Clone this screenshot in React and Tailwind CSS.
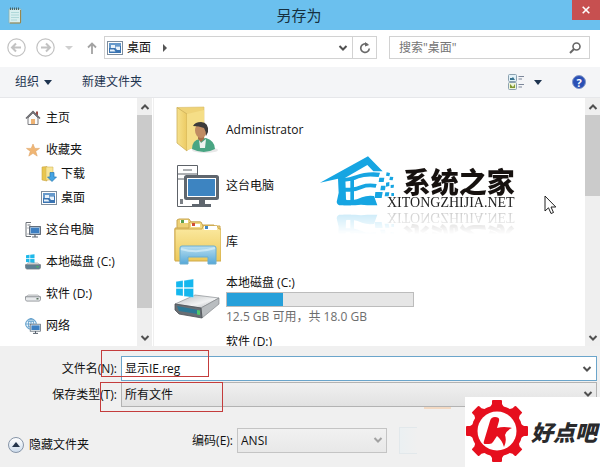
import React, { useState } from "react";

function DesktopIcon() {
	return (
		<svg viewBox="0 0 16 14" className="w-4 h-3.5 shrink-0">
			<rect x="0.5" y="0.5" width="15" height="13" fill="#fff" stroke="#7d8d9d" />
			<rect x="2" y="2" width="12" height="10" fill="#3a74b2" />
			<path d="M2 2h12v3H9l-2 2H2z" fill="#6699cb" />
			<path d="M4 4h4v3H4zM8.500 5.500H13V9H10L8.500 7zM3 8.500h4l1.500 2H3z" fill="#e9f3fb" />
		</svg>
	);
}

function HomeIcon() {
	return (
		<svg viewBox="0 0 16 16" className="size-4 shrink-0">
			<path d="M3 8v6.500h10V8L8 3z" fill="#fafafa" stroke="#7d7d80" />
			<path d="M11 1.500h2V6l-2-2z" fill="#9b4b45" />
			<path d="M1 8.500 8 1.500l7 7" fill="none" stroke="#66666b" strokeWidth="1.500" />
			<path d="M6 9h4v5H6z" fill="#eeb273" />
		</svg>
	);
}

function StarIcon() {
	return (
		<svg viewBox="0 0 16 16" className="size-4 shrink-0">
			<path d="M8 2l1.800 4.400h4.700l-3.800 2.900 1.500 4.800L8 11.300l-4.200 2.800 1.500-4.800-3.800-2.900h4.700z" fill="#f0b674" stroke="#dfa567" strokeWidth=".6" />
		</svg>
	);
}

function DownloadIcon() {
	return (
		<svg viewBox="0 0 16 16" className="size-4 shrink-0">
			<path d="M1 1l5-.5V15l-5-1z" fill="#e9c64e" stroke="#c9a544" strokeWidth=".6" />
			<path d="M5 1h7v13H5z" fill="#f8e596" stroke="#d4b65a" strokeWidth=".6" />
			<path d="M9 6.500h4V11h2.500L11 15.500 6.500 11H9z" fill="#45a4e3" stroke="#2578b5" strokeWidth=".7" />
		</svg>
	);
}

function SmallPcIcon() {
	return (
		<svg viewBox="0 0 16 16" className="size-4 shrink-0">
			<path d="M6 .5H1v14h5M2.500 3h3M2.500 6h1M2.500 12h1" fill="none" stroke="#6d7278" />
			<rect x="4.700" y="4.700" width="10.600" height="7.600" fill="#3d7fc2" stroke="#5b6470" strokeWidth="1.200" />
			<path d="M5.500 5.500h9v6h-9z" fill="none" stroke="#d4e6f6" strokeWidth=".6" />
			<path d="M10 12.500v2M7 15h6" stroke="#5b6470" strokeWidth="1.200" />
		</svg>
	);
}

function SmallDriveIcon({ system }) {
	return (
		<svg viewBox="0 0 16 16" className="size-4 shrink-0">
			{system && <path d="M1 1.200 4.500.8v3.500H1zM5.200.7 9.500.2v4.100H5.200zM1 5h3.500v3.500L1 8.100zM5.200 5h4.300v4l-4.300-.4z" fill="#1fb9ea" />}
			<path d="M3.500 9h9L15.500 11H.5z" fill="#e6e8ea" stroke="#8d9196" strokeWidth=".6" />
			<path d="M.5 10.800h15v3l-1 1.300h-13l-1-1.300z" fill={system ? "#5d7f93" : "#e8eaec"} stroke="#777b80" strokeWidth=".7" />
			<path d="M11.500 12h2v1.500h-2z" fill={system ? "#48b460" : "#57715c"} />
		</svg>
	);
}

function NetworkIcon() {
	return (
		<svg viewBox="0 0 16 16" className="size-4 shrink-0">
			<circle cx="6" cy="6" r="5.300" fill="#edf6fc" stroke="#5a9bc9" />
			<path d="M.7 6h10.600M6 .7v10.600M2 2.800q4 2 8 0M2 9.200q4-2 8 0" fill="none" stroke="#5a9bc9" strokeWidth=".8" />
			<ellipse cx="6" cy="6" rx="2.600" ry="5.300" fill="none" stroke="#5a9bc9" strokeWidth=".8" />
			<rect x="5.600" y="6.600" width="9.800" height="6.200" fill="#3d7fc2" stroke="#e9f0f5" strokeWidth="1.600" />
			<rect x="5.200" y="6.200" width="10.400" height="7" fill="none" stroke="#59636e" strokeWidth=".7" />
			<path d="M10.500 13v2M8 15.400h5" stroke="#59636e" />
		</svg>
	);
}

function UserFolderIcon() {
	return (
		<svg viewBox="0 0 48 48" className="size-12 shrink-0">
			<defs>
				<linearGradient id="uf" x1="0" x2="1">
					<stop offset="0" stopColor="#f6e18c" />
					<stop offset="1" stopColor="#ecca62" />
				</linearGradient>
			</defs>
			<ellipse cx="32" cy="44" rx="13" ry="3" fill="#e8e8e8" />
			<path d="M4 1.500 31 1v36L14 44z" fill="#efd377" stroke="#d8bc66" strokeWidth=".6" />
			<path d="M4 1.500 14 8v37L4 37z" fill="url(#uf)" stroke="#cdb05a" strokeWidth=".8" />
			<path d="M14 8 31 4v34l-17 6z" fill="#f5de87" />
			<path d="M19 43q0-9 8-10l6-1q9 3 9 11-11 6-23 0z" fill="#49a583" />
			<path d="M26 33l2 4 5-4-1 9h-5z" fill="#eef3f0" />
			<path d="M25 27h6v6l-3 3-3-3z" fill="#a3714c" />
			<ellipse cx="28" cy="24.500" rx="6" ry="7.500" fill="#c08c62" />
			<path d="M20 20q2-4 8-4 8 .5 7 10l-2 4q0-5-2-8-5-2-11-2z" fill="#3d3b3a" />
		</svg>
	);
}

function PcIcon() {
	return (
		<svg viewBox="0 0 48 48" className="size-12 shrink-0">
			<path d="M24.500 14V3.500h-20v41H23M4.500 12H24M4.500 17H11" fill="none" stroke="#5d6268" />
			<path d="M10 8h9" stroke="#5d6268" />
			<path d="M7 37h3v5H7z" fill="#7b8086" />
			<rect x="12.500" y="14.500" width="32" height="22" rx="1" fill="#fff" stroke="#5f666e" strokeWidth="3" />
			<rect x="15" y="17" width="27" height="17" fill="#3d84c1" />
			<path d="M26 37h6v5h6v3H19v-3h7z" fill="#5f666e" />
		</svg>
	);
}

function LibraryIcon() {
	return (
		<svg viewBox="0 0 48 48" className="size-12 shrink-0">
			<defs>
				<linearGradient id="lib" x1="0" y1="0" x2="0" y2="1">
					<stop offset="0" stopColor="#fbeaa2" />
					<stop offset="1" stopColor="#edc95a" />
				</linearGradient>
				<linearGradient id="stand" x1="0" y1="0" x2="0" y2="1">
					<stop offset="0" stopColor="#b9dff0" />
					<stop offset="1" stopColor="#57a8d8" />
				</linearGradient>
			</defs>
			<path d="M4 8V2l2-1h10l2 3h9l2 3h12v32H4z" fill="#edd177" stroke="#c9a651" />
			<path d="M7 2h8v3H7z" fill="#fff" />
			<path d="M8 2h3v3H8z" fill="#5aa14e" />
			<path d="M2 10h14V5l1-1h11l2 4h17v34H2z" fill="#f2da83" stroke="#cba650" />
			<path d="M18 6h9v3h-9z" fill="#fff" />
			<path d="M19 5h3v3h-3z" fill="#d14c37" />
			<path d="M2 11h27l1-3h14l2 3h2v32H2z" fill="url(#lib)" stroke="#cfa94b" />
			<path d="M31 8h13v4H31z" fill="#fff" />
			<path d="M32 8h3v3h-3z" fill="#4286c3" />
			<path d="M7 46V30q0-2 2-2h32q2 0 2 2v16h-8v-7H15v7z" fill="url(#stand)" stroke="#6aaed1" />
			<path d="M8 31q16 5 34-1" fill="none" stroke="#d9f0f8" strokeWidth="2" opacity=".7" />
		</svg>
	);
}

function DriveIcon({ system }) {
	return (
		<svg viewBox="0 0 48 48" className="size-12 shrink-0">
			<defs>
				<linearGradient id="drv" x1="0" y1="0" x2="1" y2="1">
					<stop offset="0" stopColor="#b8bcbf" />
					<stop offset=".6" stopColor="#f1f2f3" />
					<stop offset="1" stopColor="#a9adb1" />
				</linearGradient>
			</defs>
			<path d="M2 28 22 19l24 3-18 10z" fill="url(#drv)" stroke="#8b8f93" strokeWidth=".7" />
			<path d="M28 32 46 22v6L29 42z" fill="#b9bdc0" stroke="#7a7e82" strokeWidth=".6" />
			<path d="M2 28l26 4 1 10-23-4-4-4z" fill="#686e74" stroke="#4c5155" strokeWidth=".8" />
			<path d="M4 30l21 4v4L6 35z" fill="#2c7896" />
			<path d="M24 34l3 .5V39l-3-.5z" fill="#4fc66a" />
			{system && <path d="M3 5.500 10 4.500v7H3zM11 4.400 20.500 3v8.500H11zM3 12.500h7V20l-7-.8zM11 12.500h9.500v9L11 20.300z" fill="#14b7ee" stroke="#fff" strokeWidth=".3" />}
		</svg>
	);
}

function NotepadIcon() {
	return (
		<svg viewBox="0 0 14 17" className="w-3.5 h-[17px]">
			<path d="M1 2h12v13l-1 1H1z" fill="#d8efef" stroke="#8fb1ac" strokeWidth=".8" />
			<path d="M12.500 3v13H2" fill="none" stroke="#98874e" />
			<path d="M3 5.500h8M3 8h8M3 10.500h8M3 13h6" stroke="#a3d2d3" strokeWidth=".8" />
			<path d="M2.500.5v2.500M4.500.5v2.500M6.500.5v2.500M8.500.5v2.500M10.500.5v2.500" stroke="#3f5a5c" strokeWidth=".9" />
		</svg>
	);
}

function Chevron({ up = false, color = "#505050" }) {
	return (
		<svg viewBox="0 0 10 8" className="w-2.5 h-2">
			<path d={up ? "M1.500 6 5 2.500 8.500 6" : "M1.500 2 5 5.500 8.500 2"} fill="none" stroke={color} strokeWidth="2" />
		</svg>
	);
}

function Caret() {
	return (
		<svg viewBox="0 0 8 5" className="w-2 h-[5px]">
			<path d="M0 0h8L4 5z" fill="#1e3450" />
		</svg>
	);
}

function ScrollBar({ children }) {
	return (
		<div className="w-[15px] shrink-0 flex flex-col bg-[#efefef]">
			<button aria-label="向上滚动" className="h-[17px] flex items-center justify-center"><Chevron up /></button>
			<div className="flex-1 flex flex-col">{children}</div>
			<button aria-label="向下滚动" className="h-[17px] flex items-center justify-center"><Chevron /></button>
		</div>
	);
}

function SiteMark() {
	return (
		<div className="absolute left-[320px] top-[58px] flex items-start pointer-events-none [-webkit-box-reflect:below_0px_linear-gradient(transparent_55%,rgba(0,0,0,0.25))]">
			<svg viewBox="30 35 225 150" className="w-[75px] h-[50px]">
				<g fill="#16a5e2">
					<path d="M30 115 174 36l44 45h-28l-18-19-66 38 2 64q0 4 5 4h12l-2 15H92q-10 0-12-10l6-28-2-42z" />
					<path d="M98 102q20-2 40-9 30-12 72-8l-4 13q-38-5-60 4-20 10-45 10z" />
					<path d="M98 130h24q18-2 32-8 18-7 46-3l-3 11q-26-3-40 3-20 9-37 9H98z" />
					<path d="M121 105h11v66h-11z" />
					<path d="M104 168h20q18-2 32-9 16-7 36-4l10 28h-30q-20-4-36 0h-36z" />
					<path d="M208 100h15l-2 13h-15zM230 84l10 2-2 10-10-2zM228 115l10-2v12l-10 2zM213 124h14l-2 14h-14zM240 97l10 1-2 10-10-1zM196 143h22l-3 18h-21zM226 144h12l-2 12h-12zM242 122l10-1-1 9-9 1zM244 146h8v9h-8z" />
				</g>
			</svg>
			<div className="-ml-2 pt-3 flex flex-col items-end">
				<span className="text-[28px] leading-7 font-black text-[#16110f]">系统之家</span>
				<span className="text-sm leading-[14px] text-[#222] font-['Liberation_Serif',serif]">XITONGZHIJIA.NET</span>
			</div>
		</div>
	);
}

function GearMark() {
	return (
		<div className="absolute right-0 bottom-0 w-[135px] h-[70px] bg-white flex items-center overflow-hidden pointer-events-none">
			<svg viewBox="-32 -31 64 64" className="size-16 shrink-0">
				<g fill="#e60f1e">
					{[0, 45, 90, 135, 180, 225, 270, 315].map((a) => (
						<path key={a} d="M-8-22-5-27v-3q0-1 1-1h8q1 0 1 1v3l3 5z" transform={`rotate(${a})`} />
					))}
					<circle r="25.500" />
				</g>
				<circle r="19.500" fill="#fff" />
				<path d="M-7-10q1-4 5-4 5 0 4 4L0-3Q7-5 15-3 10-1 8 4q2 6-1 12Q5 9 0 5l-4 6q-1 2-4 2h-4q-2 0-1-3z" fill="#e60f1e" />
			</svg>
			<span className="ml-0.5 text-[22px] leading-none italic font-black text-[#2a2a2c] whitespace-nowrap">好点吧</span>
		</div>
	);
}

const places = [
	{ name: "主页", icon: <HomeIcon /> },
	{
		name: "收藏夹",
		icon: <StarIcon />,
		items: [
			{ name: "下载", icon: <DownloadIcon /> },
			{ name: "桌面", icon: <DesktopIcon /> }
		]
	},
	{ name: "这台电脑", icon: <SmallPcIcon /> },
	{ name: "本地磁盘 (C:)", icon: <SmallDriveIcon system /> },
	{ name: "软件 (D:)", icon: <SmallDriveIcon /> },
	{ name: "网络", icon: <NetworkIcon /> }
];

const files = [
	{ name: "Administrator", icon: <UserFolderIcon /> },
	{ name: "这台电脑", icon: <PcIcon /> },
	{ name: "库", icon: <LibraryIcon /> },
	{ name: "本地磁盘 (C:)", icon: <DriveIcon system />, used: 30, space: "12.5 GB 可用，共 18.0 GB" },
	{ name: "软件 (D:)" }
];

export default function App() {
	const [fileName, setFileName] = useState("显示IE.reg");

	return (
		<div className="relative h-screen flex flex-col overflow-hidden bg-white text-xs text-[#111] font-['Open_Sans','Noto_Sans_CJK_SC',sans-serif]">
			{/* Title bar */}
			<header className="h-[30px] shrink-0 flex items-center justify-between pl-2 bg-[#6bc0ee]">
				<NotepadIcon />
				<h1 className="flex-1 pl-1 text-center text-[15px] leading-5 text-[#16303f]">另存为</h1>
				<button aria-label="关闭" className="self-start w-7 h-5 bg-[#c75050] flex items-center justify-center">
					<svg viewBox="0 0 8 8" className="size-2"><path d="M.7.700l6.600 6.600M7.300.7.700 7.300" stroke="#fff" strokeWidth="1.600" /></svg>
				</button>
			</header>

			{/* Address row */}
			<div className="h-[37px] shrink-0 flex items-center pl-[7px] pr-2.5 pb-1 pt-0.5">
				<button aria-label="后退" className="mr-2.5">
					<svg viewBox="0 0 19 19" className="size-[19px]" fill="none" stroke="#c2c2c2"><circle cx="9.500" cy="9.500" r="8.700" strokeWidth="1.200" /><path d="M14 9.500H5.500M9 5.500l-4 4 4 4" strokeWidth="2" /></svg>
				</button>
				<button aria-label="前进" className="mr-2.5">
					<svg viewBox="0 0 19 19" className="size-[19px]" fill="none" stroke="#c2c2c2"><circle cx="9.500" cy="9.500" r="8.700" strokeWidth="1.200" /><path d="M5 9.500h8.500M10 5.500l4 4-4 4" strokeWidth="2" /></svg>
				</button>
				<button aria-label="最近位置" className="mr-3.5">
					<svg viewBox="0 0 8 4" className="w-2 h-1"><path d="M0 0h8L4 4z" fill="#cfcfcf" /></svg>
				</button>
				<button aria-label="上移" className="mr-[7px]">
					<svg viewBox="0 0 10 12" className="w-2.5 h-3" fill="none" stroke="#a3a3a3" strokeWidth="1.800"><path d="M5 12V1.500M1 5.500l4-4 4 4" /></svg>
				</button>
				<div className="flex-1 h-[23px] border border-[#d2d2d2] flex items-center pl-0.5">
					<DesktopIcon />
					<span className="ml-1">桌面</span>
					<svg viewBox="0 0 4 8" className="ml-3 w-1 h-2"><path d="M0 0l4 4-4 4z" fill="#555" /></svg>
					<button aria-label="展开路径" className="ml-auto mr-1"><Chevron /></button>
					<button aria-label="刷新" className="self-stretch w-6 border-l border-[#d2d2d2] flex items-center justify-center">
						<svg viewBox="0 0 12 12" className="size-3"><path d="M8.500 2.600A4.300 4.300 0 1 0 10.300 6.500" fill="none" stroke="#6a6a6a" strokeWidth="1.700" /><path d="M6 0v4.500L10.200 3z" fill="#6a6a6a" /></svg>
					</button>
				</div>
				<label className="ml-3 w-[201px] h-[23px] border border-[#d2d2d2] flex items-center pl-[9px] pr-2">
					<input aria-label="搜索" placeholder={'搜索"桌面"'} className="min-w-0 flex-1 outline-none placeholder:text-[#757575]" />
					<svg viewBox="0 0 12 12" className="size-3" fill="none" stroke="#666"><circle cx="7.500" cy="4.500" r="3.500" strokeWidth="1.600" /><path d="M5 7 1 11" strokeWidth="2" /></svg>
				</label>
			</div>

			{/* Toolbar */}
			<div className="h-[31px] shrink-0 flex items-center pl-[15px] pr-3.5 bg-[#f4f5f7] border-b border-[#e6e7ea] text-[#1e3450]">
				<button className="flex items-center gap-[5px]">组织<Caret /></button>
				<button className="ml-[30px]">新建文件夹</button>
				<button aria-label="更改视图" className="ml-auto flex items-center gap-2.5">
					<svg viewBox="0 0 16 16" className="size-4">
						<rect x=".5" y=".5" width="8" height="7" rx="1" fill="#e2f1f8" stroke="#8ba1b0" />
						<path d="M2 6V4h2l1-1 2 3z" fill="#37728e" />
						<rect x=".5" y="8.500" width="8" height="7" rx="1" fill="#eef4da" stroke="#8ba1b0" />
						<path d="M2 10l3 3 2-3v4H2z" fill="#809831" />
						<path d="M10.500 2.500H16M10.500 5H14M10.500 10.500H16M10.500 13H14" stroke="#7c879a" />
					</svg>
					<Caret />
				</button>
				<button aria-label="帮助" className="ml-[30px] size-3.5 rounded-full bg-[#2a50b5] border border-[#8497c6] text-white text-[11px] leading-none font-bold flex items-center justify-center">?</button>
			</div>

			{/* Folder tree and file list */}
			<main className="relative flex-1 min-h-0 flex overflow-hidden">
				<nav className="w-[137px] shrink-0 pt-2 pl-[25px]">
					<ul className="flex flex-col gap-2">
						{places.map((place) => (
							<li key={place.name}>
								<a href="#" className="h-6 flex items-center gap-[5px] whitespace-nowrap">{place.icon}{place.name}</a>
								{place.items && (
									<ul className="pl-4">
										{place.items.map((item) => (
											<li key={item.name}>
												<a href="#" className="h-6 flex items-center gap-1">{item.icon}{item.name}</a>
											</li>
										))}
									</ul>
								)}
							</li>
						))}
					</ul>
				</nav>
				<ScrollBar><div className="h-[90%] bg-[#cbcbcb]" /></ScrollBar>

				<ul className="flex-1 min-w-0 ml-px border-l border-[#efefef] pt-1 pl-[19px]">
					{files.map((file) => (
						<li key={file.name} className={file.space ? "h-[60px] flex items-center gap-[5px]" : "h-14 flex items-center gap-[5px]"}>
							{file.icon}
							{file.icon ? (
								<div>
									<p className="leading-4">{file.name}</p>
									{file.space && (
										<>
											<div className="mt-px w-[188px] h-[15px] bg-[#e6e6e6] border border-[#bcbcbc]">
												<div className="h-full bg-[#26a0da]" style={{ width: `${file.used}%` }} />
											</div>
											<p className="mt-0.5 leading-4 text-[#6d6d6d]">{file.space}</p>
										</>
									)}
								</div>
							) : (
								<p className="self-start pt-1 pl-[53px] leading-4">{file.name}</p>
							)}
						</li>
					))}
				</ul>
				<ScrollBar><div className="h-[38%] bg-[#cbcbcb]" /></ScrollBar>

				<SiteMark />
				<svg viewBox="0 0 13 20" className="absolute left-[544px] top-[97px] w-[13px] h-5">
					<path d="M1 1v15l3.500-3.200L7 18.500l2.500-1L7 12h4.800z" fill="#fff" stroke="#222" />
				</svg>
			</main>

			{/* File name, type and encoding */}
			<form className="relative shrink-0 h-[121px] bg-[#f0f0f0] pt-2.5 pr-[3px]" onSubmit={(e) => e.preventDefault()}>
				<div className="flex items-center">
					<label htmlFor="name" className="w-[121px] pr-1 text-right">文件名(N):</label>
					<div className="flex-1 h-[25px] flex items-center border border-[#6ba5cb] bg-white pr-1">
						<input id="name" value={fileName} onChange={(e) => setFileName(e.target.value)} className="min-w-0 flex-1 pl-[3px] outline-none" />
						<button type="button" aria-label="历史文件名"><Chevron /></button>
					</div>
				</div>
				<div className="mt-px flex items-center">
					<label htmlFor="type" className="w-[121px] pr-1 text-right">保存类型(T):</label>
					<div className="relative flex-1">
						<select id="type" className="block w-full h-[25px] pl-[3px] appearance-none border border-[#b3b3b3] bg-linear-to-b from-[#f0f0f0] to-[#e2e2e2] outline-none">
							<option>所有文件</option>
						</select>
						<span className="absolute right-1 top-2 pointer-events-none"><Chevron /></span>
					</div>
				</div>
				<div className="mt-5 flex items-center">
					<button type="button" className="mt-2 ml-2 flex items-center gap-[5px]">
						<span className="size-4 rounded-full border border-[#8795a8] bg-linear-to-b from-white to-[#cddcec] flex items-center justify-center">
							<svg viewBox="0 0 8 5" className="w-2 h-[5px]"><path d="M0 5h8L4 0z" fill="#24354c" /></svg>
						</span>
						隐藏文件夹
					</button>
					<label htmlFor="encoding" className="ml-[101px] w-[47px] pr-1 text-right whitespace-nowrap">编码(E):</label>
					<div className="relative w-[150px]">
						<select id="encoding" className="block w-full h-[25px] pl-[3px] appearance-none border border-[#c4c4c4] bg-linear-to-b from-[#f1f1f1] to-[#e8e8e8] outline-none">
							<option>ANSI</option>
						</select>
						<span className="absolute right-1 top-2 pointer-events-none"><Chevron color="#a2a2a2" /></span>
					</div>
					<div className="ml-3 w-[18px] h-[27px] border border-r-0 border-[#e2e8eb] bg-linear-to-r from-[#ebf0f2] to-[#f0f0f0]" />
				</div>

				{/* Highlight frames */}
				<div className="absolute left-[101px] top-1 w-[108px] h-[27px] border border-[#c43c3c] pointer-events-none" />
				<div className="absolute left-[100px] top-9 w-[123px] h-[30px] border border-[#c43c3c] pointer-events-none" />
				<div className="absolute left-[424px] top-[61px] w-[27px] h-0.5 bg-[#f3d9c2]" />
				<GearMark />
			</form>
		</div>
	);
}
